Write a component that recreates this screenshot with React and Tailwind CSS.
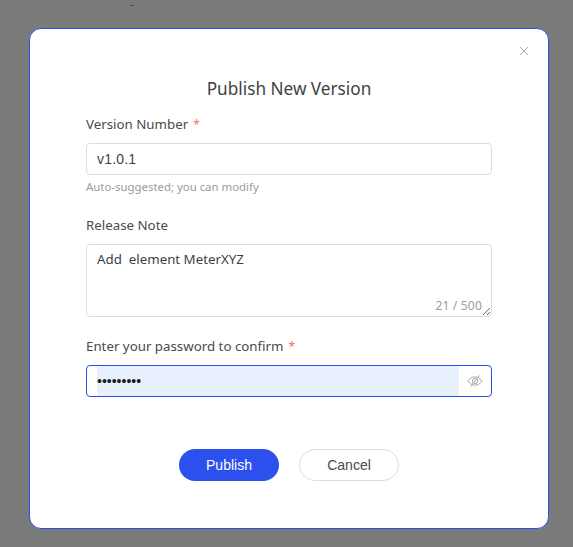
import { useState } from "react";
import { X } from "lucide-react";

const plex = "font-['Noto_Sans','Open_Sans',sans-serif]";

function EyeOff() {
    return (
        <svg width="16" height="16" viewBox="0 0 16 16" fill="none" stroke="#a8a8ae" strokeWidth="1">
            <path d="M1 8c1.8-2.8 4.2-4.2 7-4.2s5.200 1.400 7 4.200c-1.800 2.800-4.200 4.200-7 4.200S2.800 10.800 1 8z" />
            <circle cx="8" cy="8" r="2.600" />
            <path d="M12.500 2.500 3.500 13.500" />
        </svg>
    );
}

function Label({ children, required }) {
    return (
        <label className="block text-[13.300px] leading-[20px] text-[#4a4a4f]">
            {children}
            {required && <span className="text-[#f56c6c] ml-[5px] text-[12px] leading-none">*</span>}
        </label>
    );
}

export default function App() {
    const [version, setVersion] = useState("v1.0.1");
    const [note, setNote] = useState("Add  element MeterXYZ");
    const [password, setPassword] = useState("password1");

    return (
        <div className={`w-[573px] h-[547px] bg-[#7a7a7a] overflow-hidden relative pt-[28px] pl-[29px] ${plex}`}>
            <div className="absolute left-[130px] top-[5px] w-[4px] h-px bg-[#4a4a4a]" />

            <div className="w-[520px] h-[501px] bg-white border border-[#2b50ed] rounded-[12px] relative px-[56px] pt-[47px]">
                <button className="absolute right-[16px] top-[14px] text-[#8c8c92]">
                    <X size={16} strokeWidth={1.100} />
                </button>

                <h2 className="text-[17.200px] leading-[26px] text-[#3f3f44] text-center">Publish New Version</h2>

                <div className="mt-[12px]">
                    <Label required>Version Number</Label>
                    <input
                        value={version}
                        onChange={(e) => setVersion(e.target.value)}
                        className="mt-[9px] block w-full h-[32px] px-[10px] border border-[#dcdce6] rounded-[4px] text-[14px] tracking-[0.200px] text-[#3f3f44] font-['Liberation_Sans',sans-serif] outline-none"
                    />
                    <p className="mt-[3px] text-[11.400px] leading-[18px] text-[#9a9aa2]">Auto-suggested; you can modify</p>
                </div>

                <div className="mt-[19px]">
                    <Label>Release Note</Label>
                    <div className="relative mt-[9px]">
                        <textarea
                            value={note}
                            onChange={(e) => setNote(e.target.value)}
                            className="block w-full h-[73px] px-[10px] py-[4px] border border-[#dcdce6] rounded-[4px] text-[13.300px] leading-[20px] text-[#3f3f44] outline-none"
                        />
                        <span className="absolute right-[10px] bottom-[3px] text-[12px] tracking-[0.200px] leading-[16px] text-[#9a9aa2]">21 / 500</span>
                    </div>
                </div>

                <div className="mt-[19px]">
                    <Label required>Enter your password to confirm</Label>
                    <div className="mt-[9px] flex h-[32px] border border-[#2b50ed] rounded-[4px] overflow-hidden">
                        <input
                            type="password"
                            value={password}
                            onChange={(e) => setPassword(e.target.value)}
                            className="flex-1 min-w-0 ml-[10px] h-full bg-[#e8f0fe] text-[14px] text-[#1a1a1a] font-['Liberation_Sans',sans-serif] outline-none"
                        />
                        <span className="w-[32px] flex items-center justify-center">
                            <EyeOff />
                        </span>
                    </div>
                </div>

                <div className="mt-[52px] flex justify-center gap-[20px] font-['Liberation_Sans',sans-serif] text-[14px]">
                    <button className="w-[100px] h-[32px] rounded-full bg-[#2b50ed] text-white">Publish</button>
                    <button className="w-[100px] h-[32px] rounded-full bg-white border border-[#dcdce6] text-[#4a4a4f]">Cancel</button>
                </div>
            </div>
        </div>
    );
}
